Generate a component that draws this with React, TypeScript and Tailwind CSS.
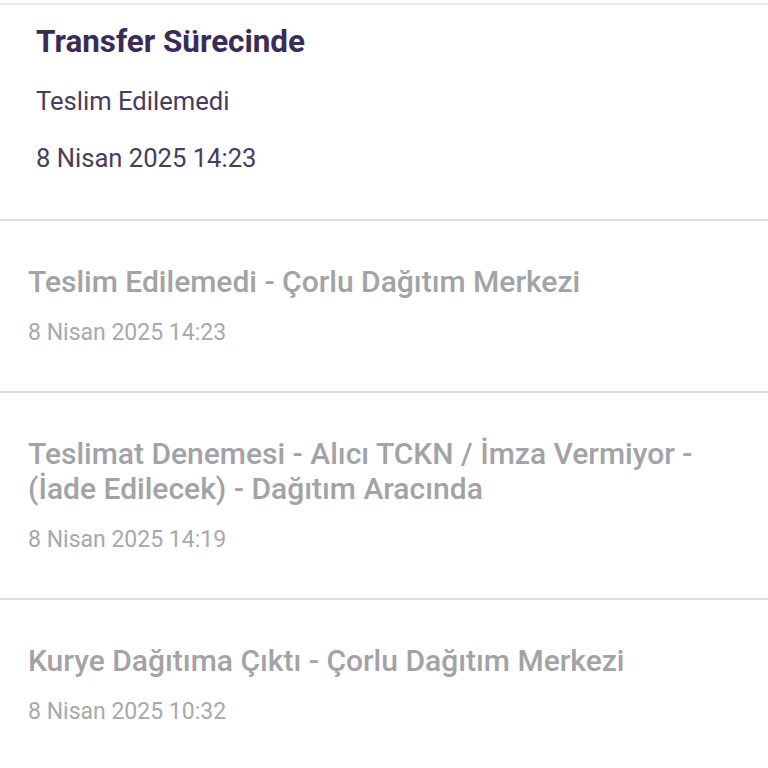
import React from "react";

const items = [
  { title: "Teslim Edilemedi - Çorlu Dağıtım Merkezi", date: "8 Nisan 2025 14:23" },
  { title: "Teslimat Denemesi - Alıcı TCKN / İmza Vermiyor - (İade Edilecek) - Dağıtım Aracında", date: "8 Nisan 2025 14:19" },
  { title: "Kurye Dağıtıma Çıktı - Çorlu Dağıtım Merkezi", date: "8 Nisan 2025 10:32" },
];

export default function App() {
  return (
    <div className="w-[768px] h-[768px] bg-white overflow-hidden pt-[3px]" style={{ fontFamily: "Roboto, 'Noto Sans', sans-serif" }}>
      <div className="border-t-2 border-[#ebebeb] pl-[36px] pt-[17px] pb-[45px]">
        <div className="text-[31.4px] leading-[40px] font-bold text-[#3a2b58]">Transfer Sürecinde</div>
        <div className="mt-[23px] text-[25.6px] leading-[32px] text-[#483c5c]">Teslim Edilemedi</div>
        <div className="mt-[25px] text-[25.6px] leading-[32px] text-[#483c5c]">8 Nisan 2025 14:23</div>
      </div>
      {items.map((it, i) => (
        <div key={i} className="border-t-2 border-[#dcdcdc] pl-[28px] pr-[40px] pt-[43px] pb-[44px]">
          <div className="text-[30px] leading-[35px] font-medium text-[#a2a2a7]">{it.title}</div>
          <div className="mt-[20px] text-[23px] leading-[28px] text-[#a8a8ad]">{it.date}</div>
        </div>
      ))}
    </div>
  );
}
